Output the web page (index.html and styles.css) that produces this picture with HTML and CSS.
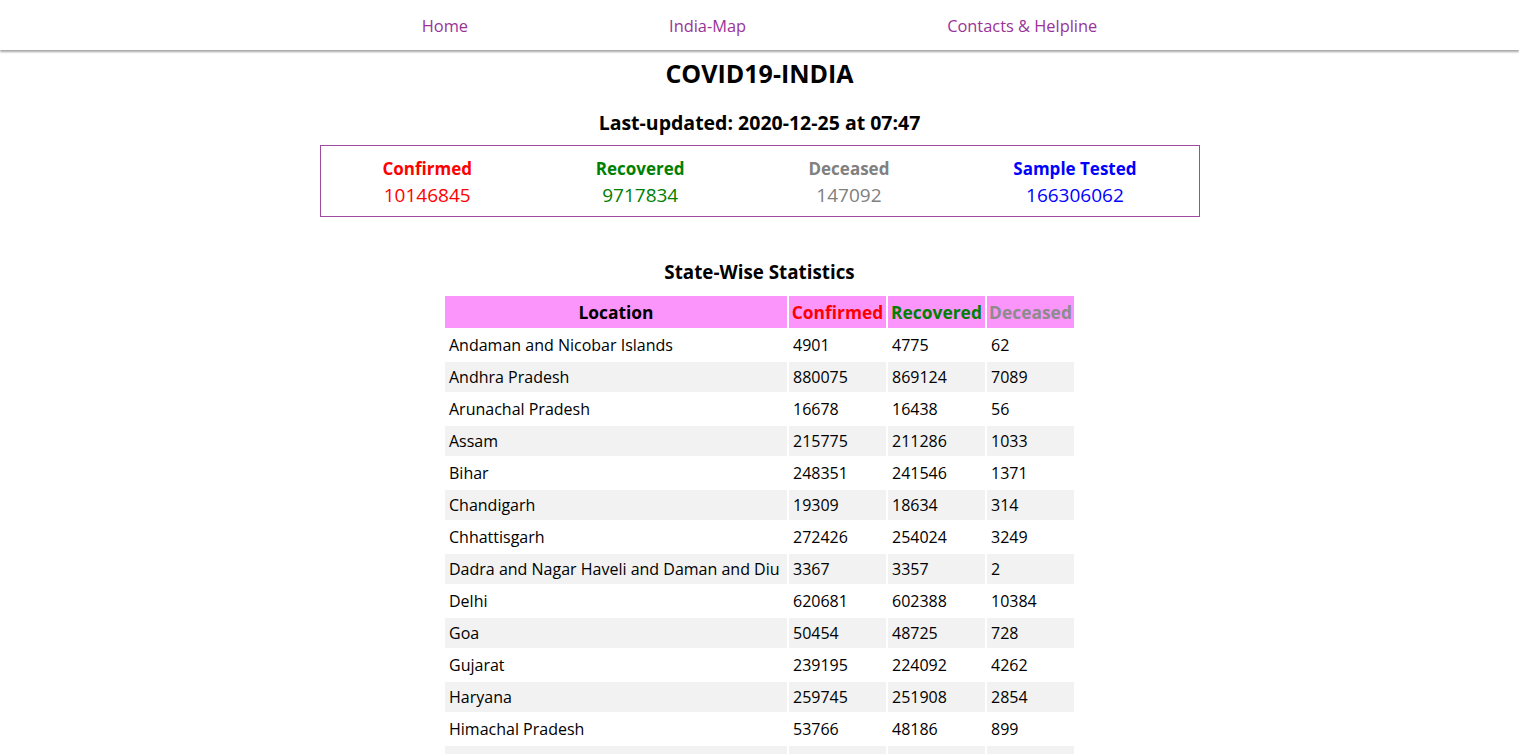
FILE: index.html
```html
<!DOCTYPE html>
<html>
<head>
<meta charset="utf-8">
<title>COVID19-INDIA</title>
<link rel="stylesheet" href="styles.css">
</head>
<body>
<nav class="navbar">
  <a class="nav-link" href="#">Home</a>
  <a class="nav-link" href="#">India-Map</a>
  <a class="nav-link" href="#">Contacts &amp; Helpline</a>
</nav>
<main class="content">
  <h1 class="title">COVID19-INDIA</h1>
  <h2 class="updated">Last-updated: 2020-12-25 at 07:47</h2>
  <section class="summary">
    <div class="stat">
      <div class="stat-label confirmed">Confirmed</div>
      <div class="stat-value confirmed">10146845</div>
    </div>
    <div class="stat">
      <div class="stat-label recovered">Recovered</div>
      <div class="stat-value recovered">9717834</div>
    </div>
    <div class="stat">
      <div class="stat-label deceased">Deceased</div>
      <div class="stat-value deceased">147092</div>
    </div>
    <div class="stat">
      <div class="stat-label tested">Sample Tested</div>
      <div class="stat-value tested">166306062</div>
    </div>
  </section>
  <h3 class="section-title">State-Wise Statistics</h3>
  <table class="states">
    <colgroup>
      <col class="c-loc"><col class="c-num"><col class="c-num"><col class="c-dec">
    </colgroup>
    <thead>
      <tr>
        <th>Location</th>
        <th class="confirmed">Confirmed</th>
        <th class="recovered">Recovered</th>
        <th class="deceased-h">Deceased</th>
      </tr>
    </thead>
    <tbody>
      <tr><td>Andaman and Nicobar Islands</td><td>4901</td><td>4775</td><td>62</td></tr>
      <tr><td>Andhra Pradesh</td><td>880075</td><td>869124</td><td>7089</td></tr>
      <tr><td>Arunachal Pradesh</td><td>16678</td><td>16438</td><td>56</td></tr>
      <tr><td>Assam</td><td>215775</td><td>211286</td><td>1033</td></tr>
      <tr><td>Bihar</td><td>248351</td><td>241546</td><td>1371</td></tr>
      <tr><td>Chandigarh</td><td>19309</td><td>18634</td><td>314</td></tr>
      <tr><td>Chhattisgarh</td><td>272426</td><td>254024</td><td>3249</td></tr>
      <tr><td>Dadra and Nagar Haveli and Daman and Diu</td><td>3367</td><td>3357</td><td>2</td></tr>
      <tr><td>Delhi</td><td>620681</td><td>602388</td><td>10384</td></tr>
      <tr><td>Goa</td><td>50454</td><td>48725</td><td>728</td></tr>
      <tr><td>Gujarat</td><td>239195</td><td>224092</td><td>4262</td></tr>
      <tr><td>Haryana</td><td>259745</td><td>251908</td><td>2854</td></tr>
      <tr><td>Himachal Pradesh</td><td>53766</td><td>48186</td><td>899</td></tr>
      <tr><td>Jammu and Kashmir</td><td>118946</td><td>113563</td><td>1848</td></tr>
    </tbody>
  </table>
</main>
</body>
</html>
```
FILE: styles.css
```css
html, body {
  margin: 0;
  padding: 0;
  background: #ffffff;
}
body {
  font-family: "Open Sans", "Noto Sans", sans-serif;
  color: #000;
}
.navbar {
  height: 50px;
  display: flex;
  justify-content: center;
  align-items: center;
  gap: 201px;
  background: #fff;
  box-shadow: 0 2px 2px rgba(0, 0, 0, 0.35);
}
.nav-link {
  color: #993399;
  text-decoration: none;
  font-size: 16.4px;
  line-height: 24px;
  margin-top: 2px;
}
.content {
  display: flex;
  flex-direction: column;
  align-items: center;
}
.title {
  margin: 7px 0 0;
  font-size: 25px;
  line-height: 32px;
  font-weight: 700;
}
.updated {
  margin: 21px 0 0;
  font-size: 19.5px;
  line-height: 26px;
  font-weight: 700;
}
.summary {
  margin-top: 9px;
  width: 878px;
  border: 1px solid #a04aa0;
  display: flex;
  justify-content: space-around;
  padding: 11px 0 8px;
  text-align: center;
}
.stat-label {
  font-size: 17px;
  line-height: 24px;
  font-weight: 700;
}
.stat-value {
  font-size: 19px;
  line-height: 26px;
  margin-top: 1px;
}
.confirmed { color: #ff0000; }
.recovered { color: #008000; }
.deceased { color: #808080; }
.tested { color: #0000ff; }
.deceased-h { color: #8c8c8c; }
.section-title {
  margin: 42px 0 0;
  font-size: 18.8px;
  line-height: 26px;
  font-weight: 700;
}
.states {
  margin-top: 9px;
  border-spacing: 2px;
  table-layout: fixed;
  width: 633px;
  font-size: 16px;
}
.c-loc { width: 342px; }
.c-num { width: 97px; }
.c-dec { width: 87px; }
.states th {
  background: #fb95fb;
  height: 32px;
  padding: 0;
  font-size: 17.4px;
  font-weight: 700;
  text-align: center;
  white-space: nowrap;
}
.states td {
  height: 30px;
  padding: 0 0 0 4px;
  white-space: nowrap;
  overflow: hidden;
}
.states tbody tr:nth-child(even) td {
  background: #f2f2f2;
}
```
